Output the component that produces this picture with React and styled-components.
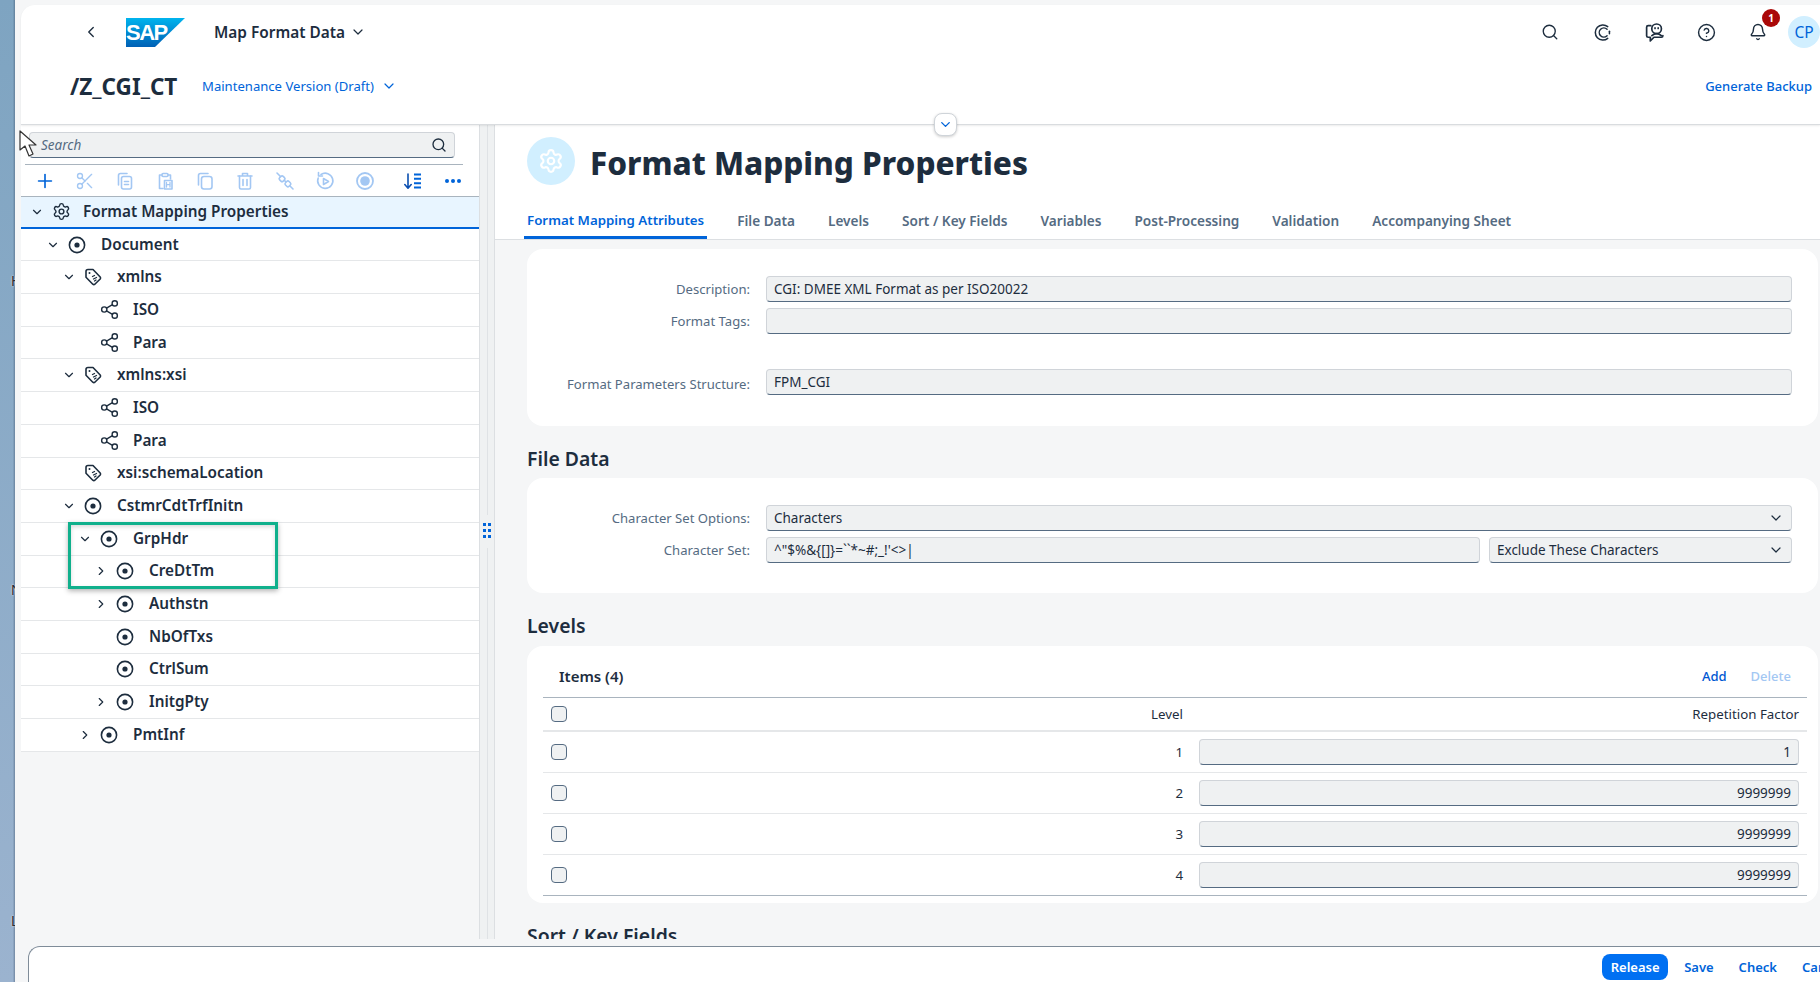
import React from 'react';
import styled, { createGlobalStyle } from 'styled-components';
import { ChevronDown, ChevronLeft, ChevronRight, Search as SearchIcon, CircleHelp, Bell, Plus, Scissors, Settings, Share2 } from 'lucide-react';

const GlobalStyle = createGlobalStyle`
  html, body {
    margin: 0;
    padding: 0;
    background: #f5f6f7;
  }
  * { box-sizing: border-box; }
  #root {
    font-family: "Noto Sans", "Liberation Sans", sans-serif;
    color: #1d2d3e;
  }
`;

const Page = styled.div`
  width: 1820px;
  height: 982px;
  display: flex;
  overflow: hidden;
  position: relative;
  background: #f5f6f7;
`;

const Strip = styled.div`
  width: 15px;
  flex: none;
  position: relative;
  overflow: hidden;
  background: linear-gradient(90deg, rgba(255,255,255,0) 85%, rgba(60,80,105,.45)), linear-gradient(180deg, #7ea4c1, #9bb3cf);
`;

const StripGlyph = styled.span`
  position: absolute;
  left: 11px;
  top: ${p => p.$top}px;
  font: 15px "Liberation Sans", sans-serif;
  color: #2a2f38;
  text-shadow: 0 0 2px #fff;
`;

const Shell = styled.div`
  flex: 1;
  min-width: 0;
  display: flex;
  flex-direction: column;
  padding: 5px 0 0 6px;
`;

const Header = styled.header`
  height: 120px;
  flex: none;
  background: #fff;
  border-radius: 14px 0 0 0;
  border-bottom: 1px solid #d9dcdf;
  box-shadow: 0 1px 2px rgba(0,0,0,.08);
  position: relative;
  z-index: 2;
`;

const TopRow = styled.div`
  height: 54px;
  display: flex;
  align-items: center;
`;

const BackButton = styled.div`
  width: 18px;
  margin-left: 61px;
  display: flex;
  color: #1d2d3e;
`;

const LogoWrap = styled.div`
  margin-left: 26px;
  height: 29px;
  display: flex;
`;

const AppTitle = styled.div`
  margin-left: 29px;
  display: flex;
  align-items: center;
  gap: 5px;
  font-size: 15.4px;
  font-weight: 600;
`;

const ShellIcons = styled.div`
  margin-left: auto;
  display: flex;
  align-items: center;
  position: relative;
`;

const ShellIcon = styled.div`
  width: 52px;
  display: flex;
  justify-content: center;
  color: #1d2d3e;
  position: relative;
`;

const Badge = styled.span`
  position: absolute;
  left: 30px;
  top: -14px;
  width: 18px;
  height: 18px;
  border-radius: 50%;
  background: #aa0808;
  color: #fff;
  font-size: 10px;
  font-weight: 700;
  display: flex;
  align-items: center;
  justify-content: center;
`;

const Avatar = styled.div`
  width: 32px;
  height: 32px;
  flex: none;
  margin-left: 4px;
  border-radius: 50%;
  background: #d1efff;
  color: #0064d9;
  font-size: 15.5px;
  display: flex;
  align-items: center;
  justify-content: center;
`;

const SubRow = styled.div`
  display: flex;
  align-items: center;
  height: 54px;
  padding-left: 49px;
  padding-right: 8px;
`;

const ObjectName = styled.div`
  font-size: 22.5px;
  font-weight: 700;
  width: 132px;
  white-space: nowrap;
`;

const VersionLink = styled.div`
  display: flex;
  align-items: center;
  gap: 7px;
  font-size: 13.1px;
  color: #0064d9;
`;

const HeaderAction = styled.div`
  margin-left: auto;
  font-size: 13px;
  font-weight: 500;
  color: #0064d9;
`;

const CollapseButton = styled.div`
  position: absolute;
  left: 913px;
  bottom: -12px;
  width: 23px;
  height: 23px;
  background: #fff;
  border: 1px solid #cfd4d9;
  border-radius: 8px;
  box-shadow: 0 1px 3px rgba(0,0,0,.2);
  color: #0064d9;
  display: flex;
  align-items: center;
  justify-content: center;
`;

const Body = styled.div`
  flex: 1;
  min-height: 0;
  display: flex;
`;

const TreePanel = styled.aside`
  width: 459px;
  flex: none;
  display: flex;
  flex-direction: column;
  background: #f5f6f7;
  border-right: 1px solid #dcdfe2;
`;

const TreeTop = styled.div`
  background: #fff;
  padding: 7px 0 0 8px;
`;

const SearchBox = styled.div`
  width: 426px;
  height: 26px;
  display: flex;
  align-items: center;
  justify-content: space-between;
  padding: 0 7px 0 11px;
  background: #eff1f2;
  border: 1px solid #d0d4d9;
  border-bottom-color: #556b82;
  border-radius: 4px;
  font-size: 13.5px;
  font-style: italic;
  color: #556b82;
`;

const Toolbar = styled.div`
  margin: 6px 16px 0 -4px;
  height: 32px;
  display: flex;
  align-items: center;
  border-top: 1px solid #a9b4be;
`;

const ToolButton = styled.div`
  width: 40px;
  flex: none;
  display: flex;
  justify-content: center;
  color: ${p => (p.$off ? '#a3c7f3' : '#0064d9')};
`;

const ToolSeparator = styled.div`
  width: 1px;
  height: 24px;
  margin: 0 4px;
  background: #d3d7db;
`;

const TreeRow = styled.div`
  height: 32.7px;
  display: flex;
  align-items: center;
  padding-left: ${p => 8 + p.$level * 16}px;
  background: ${p => (p.$selected ? '#e8f5ff' : '#fff')};
  border-top: ${p => (p.$selected ? '1px solid #a9b4be' : 'none')};
  border-bottom: ${p => (p.$selected ? '2px solid #0064d9' : '1px solid #e5e7e9')};
`;

const TreeToggle = styled.div`
  width: 16px;
  flex: none;
  display: flex;
  justify-content: center;
  color: #1d2d3e;
`;

const TreeGlyph = styled.div`
  width: 24px;
  margin-left: 4px;
  flex: none;
  display: flex;
  justify-content: center;
  color: #1d2d3e;
`;

const TreeLabel = styled.div`
  margin-left: ${p => (p.$root ? 10 : 12)}px;
  margin-top: -2px;
  font-size: 15.3px;
  font-weight: 600;
`;

const Splitter = styled.div`
  width: 15px;
  flex: none;
  background: #eff1f2;
  display: flex;
  flex-direction: column;
  align-items: center;
  border-right: 1px solid #dcdfe2;
  &::before, &::after {
    content: "";
    width: 1px;
    flex: 1;
    background: #dfe2e5;
  }
`;

const Grip = styled.div`
  margin: 0;
  padding: 8px 0;
  display: flex;
  height: 32px;
  background: #eff1f2;
  color: #0064d9;
  transform: translateY(-1px);
`;

const Main = styled.main`
  flex: 1;
  min-width: 0;
  display: flex;
  flex-direction: column;
`;

const PageHead = styled.div`
  flex: none;
  background: #fff;
  height: 115px;
  padding-top: 12px;
  border-bottom: 1px solid #dcdfe2;
`;

const TitleRow = styled.div`
  display: flex;
  align-items: center;
  gap: 16px;
  height: 48px;
  padding-left: 32px;
`;

const TitleBadge = styled.div`
  width: 48px;
  height: 48px;
  border-radius: 50%;
  background: #d1efff;
  color: #fff;
  display: flex;
  align-items: center;
  justify-content: center;
`;

const Title = styled.h1`
  margin: 2px 0 0 -1px;
  font-size: 31.5px;
  font-weight: 800;
  white-space: nowrap;
`;

const Tabs = styled.nav`
  margin: 19px 0 0 29px;
  height: 35px;
  display: flex;
  gap: 27px;
`;

const Tab = styled.div`
  padding: 0 3px;
  display: flex;
  align-items: center;
  font-size: ${p => (p.$active ? 13.3 : 13.6)}px;
  font-weight: 600;
  color: ${p => (p.$active ? '#0064d9' : '#556b82')};
  border-bottom: 3px solid ${p => (p.$active ? '#0064d9' : 'transparent')};
`;

const Content = styled.div`
  flex: 1;
  min-height: 0;
  overflow: hidden;
  padding: 9px 2px 0 32px;
  background: #f5f6f7;
`;

const Card = styled.section`
  background: #fff;
  border-radius: 16px;
  padding: ${p => p.$pad};
`;

const SectionTitle = styled.h2`
  margin: 0;
  height: ${p => p.$h || 52}px;
  padding-top: 12px;
  display: flex;
  align-items: center;
  font-size: 19.4px;
  font-weight: 600;
`;

const FieldRow = styled.div`
  display: flex;
  align-items: center;
  gap: 16px;
  margin-top: ${p => p.$top || 0}px;
`;

const FieldLabel = styled.label`
  width: 223px;
  flex: none;
  text-align: right;
  font-size: 13.1px;
  color: #556b82;
  margin-top: ${p => (p.$low ? 4 : 0)}px;
`;

const Field = styled.div`
  flex: ${p => p.$width ? 'none' : 1};
  width: ${p => p.$width ? `${p.$width}px` : 'auto'};
  height: 26px;
  display: flex;
  align-items: center;
  justify-content: ${p => (p.$end ? 'flex-end' : 'space-between')};
  padding: 0 7px;
  background: #eff1f2;
  border: 1px solid #d0d4d9;
  border-bottom-color: #556b82;
  border-radius: 4px;
  font-size: 13.5px;
  color: #1d2d3e;
`;

const FieldGroup = styled.div`
  flex: 1;
  display: flex;
  gap: 9px;
`;

const ItemsBar = styled.div`
  height: 51px;
  display: flex;
  align-items: center;
  padding: 8px 16px 0 16px;
`;

const ItemsTitle = styled.div`
  font-size: 15px;
  font-weight: 600;
`;

const ItemsActions = styled.div`
  margin-left: auto;
  display: flex;
  gap: 24px;
  font-size: 13px;
  font-weight: 500;
`;

const ItemsAction = styled.span`
  color: ${p => (p.$off ? '#a3c7f3' : '#0057d2')};
`;

const TableRow = styled.div`
  display: grid;
  grid-template-columns: 32px 1fr 600px;
  column-gap: 16px;
  align-items: center;
  padding: 0 8px;
  height: ${p => (p.$head ? 35 : 41)}px;
  font-size: 13.3px;
  border-top: ${p => (p.$head ? '1px solid #a9b4be' : 'none')};
  border-bottom: ${p => (p.$head ? '2px solid #e5e7e9' : p.$last ? '1px solid #a9b4be' : '1px solid #e5e7e9')};
`;

const NumCell = styled.div`
  text-align: right;
`;

const Check = styled.div`
  width: 16px;
  height: 16px;
  background: #eff1f2;
  border: 1px solid #556b82;
  border-radius: 4px;
`;

const Footer = styled.footer`
  flex: none;
  height: 43px;
  padding-top: 7px;
  background: #f5f6f7;
  position: relative;
  z-index: 3;
`;

const FooterBar = styled.div`
  height: 36px;
  margin-left: 7px;
  background: #fff;
  border: 1px solid #7f8c99;
  border-right: none;
  border-bottom: none;
  border-radius: 12px 0 0 0;
  display: flex;
  justify-content: flex-end;
  padding-top: 7px;
`;

const FooterActions = styled.div`
  display: flex;
  align-items: center;
  height: 26px;
  gap: 25px;
  margin-right: -24px;
  font-size: 13px;
  font-weight: 600;
  color: #0064d9;
  white-space: nowrap;
`;

const ReleaseButton = styled.div`
  width: 66px;
  height: 26px;
  margin-right: -9px;
  background: #0070f2;
  color: #fff;
  border-radius: 8px;
  display: flex;
  align-items: center;
  justify-content: center;
`;

const Highlight = styled.div`
  position: absolute;
  left: 68px;
  top: 522px;
  width: 210px;
  height: 67px;
  border: 3px solid #10b08c;
  box-shadow: 0 2px 5px rgba(0,0,0,.3), inset 0 2px 4px rgba(0,0,0,.15);
  pointer-events: none;
  z-index: 4;
`;

const Cursor = styled.svg`
  position: absolute;
  left: 19px;
  top: 130px;
  z-index: 5;
`;

const Icon = ({ size = 20, children, sw = 1.6 }) => (
  <svg width={size} height={size} viewBox="0 0 20 20" fill="none" stroke="currentColor" strokeWidth={sw} strokeLinecap="round" strokeLinejoin="round">
    {children}
  </svg>
);

const SapLogo = () => (
  <svg width="59" height="29" viewBox="0 0 59 29">
    <defs>
      <linearGradient id="sapBlue" x1="0" y1="0" x2="0" y2="1">
        <stop offset="0" stopColor="#00b4ee" />
        <stop offset="1" stopColor="#0060b5" />
      </linearGradient>
    </defs>
    <polygon points="0,0 59,0 29,29 0,29" fill="url(#sapBlue)" />
    <text x="0" y="22" fontFamily="Liberation Sans" fontWeight="700" fontSize="22" letterSpacing="-1.5" fill="#fff">SAP</text>
  </svg>
);

const TargetIcon = () => (
  <Icon size={20}><circle cx="10" cy="10" r="7.6" strokeWidth="1.6" /><circle cx="10" cy="10" r="2.6" fill="currentColor" stroke="none" /></Icon>
);

const TagIcon = () => (
  <Icon size={20}>
    <path d="M3 4.5 Q3 2.5 5 2.5 L10 2.5 L17.2 10 Q18 11 17.2 12 L11.8 17.3 Q10.8 18 9.8 17.2 L3 10.2 Z" />
    <circle cx="6.5" cy="6" r="1" fill="currentColor" stroke="none" />
    <path d="M9.5 9.5 l2 -1 M10.5 12 l3 -1.5 M11.5 14 l1.5 -1" strokeWidth="1.3" />
  </Icon>
);

const ShareIcon = () => <Share2 size={21} strokeWidth={1.6} />;

const GearIcon = ({ size = 19, sw = 1.8 }) => <Settings size={size} strokeWidth={sw} />;

const StackDocIcon = () => (
  <Icon>
    <path d="M3.5 14 V4.5 Q3.5 2.5 5.5 2.5 H12" />
    <rect x="6.5" y="5.5" width="10" height="12.5" rx="2" />
    <path d="M9.5 10.5 h4 M9.5 13.5 h4" />
  </Icon>
);

const PasteIcon = () => (
  <Icon>
    <path d="M7 4 H4.5 V17.5 H8 M13 4 H15.5 V8" />
    <rect x="7" y="2.5" width="6" height="3" rx="1" />
    <path d="M9.5 9.5 H17 V18 H9.5 Z" />
    <path d="M11.5 11.5 V16 M15 11.5 V16 M11.5 13.7 H15" strokeWidth="1.3" />
  </Icon>
);

const CopyIcon = () => (
  <Icon>
    <path d="M3.5 14 V4.5 Q3.5 2.5 5.5 2.5 H13" />
    <rect x="6.5" y="5.5" width="10.5" height="12.5" rx="2.5" />
  </Icon>
);

const TrashIcon = () => (
  <Icon>
    <path d="M3 5 H17 M7.5 5 V2.5 H12.5 V5" />
    <path d="M4.5 5 V16.5 Q4.5 18 6 18 H14 Q15.5 18 15.5 16.5 V5" />
    <path d="M8 8.5 V14.5 M12 8.5 V14.5" />
  </Icon>
);

const LinkOffIcon = () => (
  <Icon>
    <path d="M2 2 L18 18" />
    <rect x="4.6" y="5.2" width="5" height="5" rx="1.6" transform="rotate(45 7 7.7)" fill="#fff" />
    <rect x="10.4" y="10.4" width="5" height="5" rx="1.6" transform="rotate(45 12.9 12.9)" fill="#fff" />
  </Icon>
);

const ReplayIcon = () => (
  <Icon>
    <path d="M6 3.5 A7.6 7.6 0 1 1 3.2 7" />
    <path d="M3.5 1.5 V5 H7.5" />
    <path d="M8.5 7.5 L13.5 10.5 L8.5 13.5 Z" fill="none" />
  </Icon>
);

const RingIcon = () => (
  <Icon>
    <circle cx="10" cy="10" r="8" strokeWidth="1.8" />
    <circle cx="10" cy="10" r="4.8" fill="currentColor" stroke="none" />
  </Icon>
);

const SortIcon = () => (
  <Icon>
    <path d="M5 3 V17 M1.8 13.5 L5 17.2 L8.2 13.5" stroke="#0b4fb0" />
    <path d="M11 3.5 H18 M11 7.8 H18 M11 12.2 H18 M11 16.5 H18" strokeWidth="2" strokeLinecap="butt" />
  </Icon>
);

const DotsIcon = () => (
  <svg width="20" height="20" viewBox="0 0 20 20" fill="currentColor">
    <circle cx="4" cy="10" r="2" /><circle cx="10" cy="10" r="2" /><circle cx="16" cy="10" r="2" />
  </svg>
);

const JouleIcon = () => (
  <Icon size={19} sw={1.6}>
    <path d="M15.5 3.8 A8 8 0 1 0 15.5 16.2" />
    <path d="M14.8 6.6 A4.8 4.8 0 1 0 14.8 13.4" />
    <path d="M17.3 8.6 V11.4" />
  </Icon>
);

const SupportIcon = () => (
  <Icon size={21} sw={1.6}>
    <path d="M6.5 3.5 H4 Q2.5 3.5 2.5 5 V13 Q2.5 14.5 4 14.5 H6 V18 L9.5 14.5 H16.5 Q18 14.5 18 13" />
    <circle cx="12" cy="6.5" r="4.6" />
    <path d="M7.5 13 Q12 9 16.5 13" />
    <path d="M10.5 5.6 v.6 M13.5 5.6 v.6" />
  </Icon>
);

const GripIcon = () => (
  <svg width="8" height="16" viewBox="0 0 8 16" fill="currentColor">
    <rect x="0" y="0" width="3" height="3" /><rect x="5" y="0" width="3" height="3" />
    <rect x="0" y="6" width="3" height="3" /><rect x="5" y="6" width="3" height="3" />
    <rect x="0" y="12" width="3" height="3" /><rect x="5" y="12" width="3" height="3" />
  </svg>
);

const toolItems = [
  { key: 'add', icon: <Plus size={22} strokeWidth={1.8} /> },
  { key: 'cut', icon: <Scissors size={20} strokeWidth={1.6} />, off: true },
  { key: 'copy-doc', icon: <StackDocIcon />, off: true },
  { key: 'paste', icon: <PasteIcon />, off: true },
  { key: 'copy', icon: <CopyIcon />, off: true },
  { key: 'trash', icon: <TrashIcon />, off: true },
  { key: 'unlink', icon: <LinkOffIcon />, off: true },
  { key: 'replay', icon: <ReplayIcon />, off: true },
  { key: 'ring', icon: <RingIcon />, off: true },
];

const tree = [
  { label: 'Format Mapping Properties', level: 0, open: true, kind: 'gear', selected: true },
  { label: 'Document', level: 1, open: true, kind: 'target' },
  { label: 'xmlns', level: 2, open: true, kind: 'tag' },
  { label: 'ISO', level: 3, kind: 'share' },
  { label: 'Para', level: 3, kind: 'share' },
  { label: 'xmlns:xsi', level: 2, open: true, kind: 'tag' },
  { label: 'ISO', level: 3, kind: 'share' },
  { label: 'Para', level: 3, kind: 'share' },
  { label: 'xsi:schemaLocation', level: 2, kind: 'tag' },
  { label: 'CstmrCdtTrfInitn', level: 2, open: true, kind: 'target' },
  { label: 'GrpHdr', level: 3, open: true, kind: 'target' },
  { label: 'CreDtTm', level: 4, closed: true, kind: 'target' },
  { label: 'Authstn', level: 4, closed: true, kind: 'target' },
  { label: 'NbOfTxs', level: 4, kind: 'target' },
  { label: 'CtrlSum', level: 4, kind: 'target' },
  { label: 'InitgPty', level: 4, closed: true, kind: 'target' },
  { label: 'PmtInf', level: 3, closed: true, kind: 'target' },
];

const treeIcons = { gear: <GearIcon />, target: <TargetIcon />, tag: <TagIcon />, share: <ShareIcon /> };

const tabs = ['Format Mapping Attributes', 'File Data', 'Levels', 'Sort / Key Fields', 'Variables', 'Post-Processing', 'Validation', 'Accompanying Sheet'];

const levels = [['1', '1'], ['2', '9999999'], ['3', '9999999'], ['4', '9999999']];

export default function App() {
  return (
    <Page>
      <GlobalStyle />
      <Strip>
        <StripGlyph $top={272}>H</StripGlyph>
        <StripGlyph $top={581}>N</StripGlyph>
        <StripGlyph $top={912}>L</StripGlyph>
      </Strip>
      <Shell>
        <Header>
          <TopRow>
            <BackButton><ChevronLeft size={18} strokeWidth={1.8} /></BackButton>
            <LogoWrap><SapLogo /></LogoWrap>
            <AppTitle>Map Format Data <ChevronDown size={16} strokeWidth={1.8} /></AppTitle>
            <ShellIcons>
              <ShellIcon><SearchIcon size={18} strokeWidth={1.8} /></ShellIcon>
              <ShellIcon><JouleIcon /></ShellIcon>
              <ShellIcon><SupportIcon /></ShellIcon>
              <ShellIcon><CircleHelp size={19} strokeWidth={1.8} /></ShellIcon>
              <ShellIcon><Bell size={18} strokeWidth={1.9} /><Badge>1</Badge></ShellIcon>
              <Avatar>CP</Avatar>
            </ShellIcons>
          </TopRow>
          <SubRow>
            <ObjectName>/Z_CGI_CT</ObjectName>
            <VersionLink>Maintenance Version (Draft) <ChevronDown size={16} strokeWidth={1.8} /></VersionLink>
            <HeaderAction>Generate Backup</HeaderAction>
          </SubRow>
          <CollapseButton><ChevronDown size={15} strokeWidth={2.2} /></CollapseButton>
        </Header>
        <Body>
          <TreePanel>
            <TreeTop>
              <SearchBox>Search <SearchIcon size={16} strokeWidth={2} color="#1d2d3e" /></SearchBox>
              <Toolbar>
                {toolItems.map(t => <ToolButton key={t.key} $off={t.off}>{t.icon}</ToolButton>)}
                <ToolSeparator />
                <ToolButton><SortIcon /></ToolButton>
                <ToolButton><DotsIcon /></ToolButton>
              </Toolbar>
            </TreeTop>
            {tree.map((n, i) => (
              <TreeRow key={i} $level={n.level} $selected={n.selected}>
                <TreeToggle>
                  {n.open && <ChevronDown size={14} strokeWidth={2} />}
                  {n.closed && <ChevronRight size={14} strokeWidth={2} />}
                </TreeToggle>
                <TreeGlyph>{treeIcons[n.kind]}</TreeGlyph>
                <TreeLabel $root={n.level === 0}>{n.label}</TreeLabel>
              </TreeRow>
            ))}
          </TreePanel>
          <Splitter><Grip><GripIcon /></Grip></Splitter>
          <Main>
            <PageHead>
              <TitleRow>
                <TitleBadge><GearIcon size={26} sw={2} /></TitleBadge>
                <Title>Format Mapping Properties</Title>
              </TitleRow>
              <Tabs>
                {tabs.map((t, i) => <Tab key={t} $active={i === 0}>{t}</Tab>)}
              </Tabs>
            </PageHead>
            <Content>
              <Card $pad="27px 26px 31px 0">
                <FieldRow>
                  <FieldLabel>Description:</FieldLabel>
                  <Field>CGI: DMEE XML Format as per ISO20022</Field>
                </FieldRow>
                <FieldRow $top={6}>
                  <FieldLabel>Format Tags:</FieldLabel>
                  <Field />
                </FieldRow>
                <FieldRow $top={35}>
                  <FieldLabel $low>Format Parameters Structure:</FieldLabel>
                  <Field>FPM_CGI</Field>
                </FieldRow>
              </Card>
              <SectionTitle>File Data</SectionTitle>
              <Card $pad="27px 26px 30px 0">
                <FieldRow>
                  <FieldLabel>Character Set Options:</FieldLabel>
                  <Field>Characters <ChevronDown size={16} strokeWidth={1.8} /></Field>
                </FieldRow>
                <FieldRow $top={6}>
                  <FieldLabel>Character Set:</FieldLabel>
                  <FieldGroup>
                    <Field>^"$%&amp;{'{[]}'}=``*~#;_!'&lt;&gt;|</Field>
                    <Field $width={303}>Exclude These Characters <ChevronDown size={16} strokeWidth={1.8} /></Field>
                  </FieldGroup>
                </FieldRow>
              </Card>
              <SectionTitle $h={53}>Levels</SectionTitle>
              <Card $pad="0 11px 7px 16px">
                <ItemsBar>
                  <ItemsTitle>Items (4)</ItemsTitle>
                  <ItemsActions>
                    <ItemsAction>Add</ItemsAction>
                    <ItemsAction $off>Delete</ItemsAction>
                  </ItemsActions>
                </ItemsBar>
                <TableRow $head>
                  <Check />
                  <NumCell>Level</NumCell>
                  <NumCell>Repetition Factor</NumCell>
                </TableRow>
                {levels.map(([lvl, factor], i) => (
                  <TableRow key={lvl} $last={i === levels.length - 1}>
                    <Check />
                    <NumCell>{lvl}</NumCell>
                    <Field $end>{factor}</Field>
                  </TableRow>
                ))}
              </Card>
              <SectionTitle>Sort / Key Fields</SectionTitle>
            </Content>
          </Main>
        </Body>
        <Footer>
          <FooterBar>
            <FooterActions>
              <ReleaseButton>Release</ReleaseButton>
              <span>Save</span>
              <span>Check</span>
              <span>Cancel</span>
            </FooterActions>
          </FooterBar>
        </Footer>
      </Shell>
      <Highlight />
      <Cursor width="20" height="28" viewBox="0 0 20 28">
        <path d="M1 1 L1 20 L6 16 L10 26 L14 24 L10 15 L17 15 Z" fill="#fff" stroke="#333" strokeWidth="1.2" strokeLinejoin="round" />
      </Cursor>
    </Page>
  );
}
